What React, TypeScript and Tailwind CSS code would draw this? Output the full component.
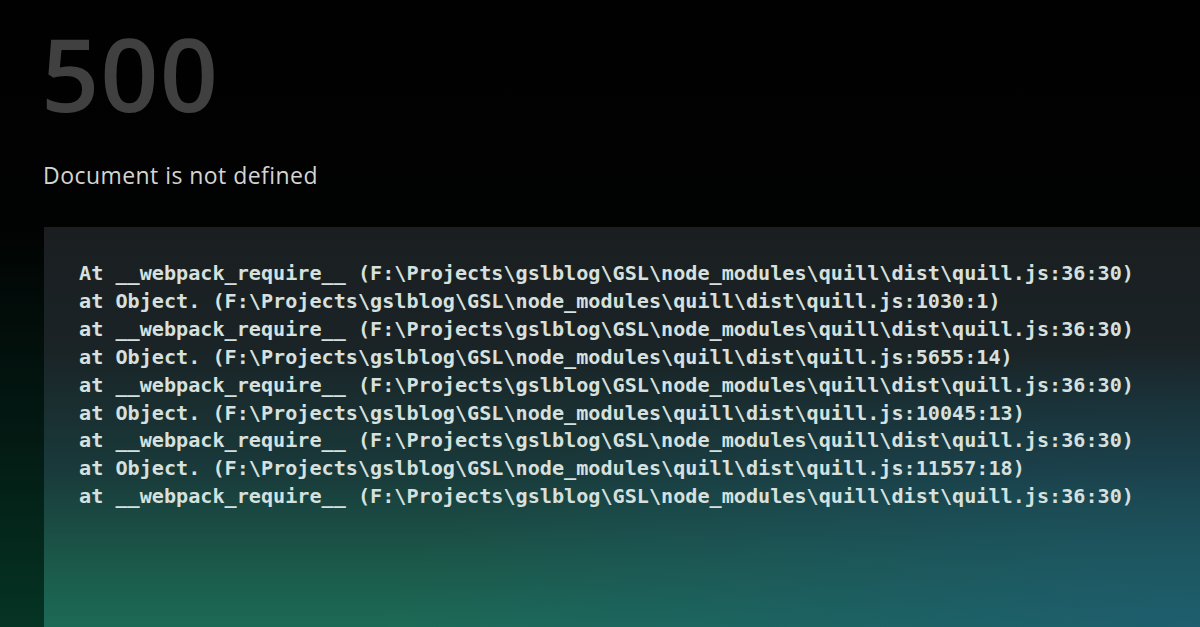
const lines = [
  "At __webpack_require__ (F:\\Projects\\gslblog\\GSL\\node_modules\\quill\\dist\\quill.js:36:30)",
  "at Object. (F:\\Projects\\gslblog\\GSL\\node_modules\\quill\\dist\\quill.js:1030:1)",
  "at __webpack_require__ (F:\\Projects\\gslblog\\GSL\\node_modules\\quill\\dist\\quill.js:36:30)",
  "at Object. (F:\\Projects\\gslblog\\GSL\\node_modules\\quill\\dist\\quill.js:5655:14)",
  "at __webpack_require__ (F:\\Projects\\gslblog\\GSL\\node_modules\\quill\\dist\\quill.js:36:30)",
  "at Object. (F:\\Projects\\gslblog\\GSL\\node_modules\\quill\\dist\\quill.js:10045:13)",
  "at __webpack_require__ (F:\\Projects\\gslblog\\GSL\\node_modules\\quill\\dist\\quill.js:36:30)",
  "at Object. (F:\\Projects\\gslblog\\GSL\\node_modules\\quill\\dist\\quill.js:11557:18)",
  "at __webpack_require__ (F:\\Projects\\gslblog\\GSL\\node_modules\\quill\\dist\\quill.js:36:30)",
];

export default function App() {
  return (
    <div className="w-full h-[627px] overflow-hidden flex flex-col bg-[linear-gradient(180deg,#010101_0%,#010202_35%,#031a13_70%,#053424_100%)] font-['Open_Sans',sans-serif]">
      <h1 className="pl-[41px] pt-[22px] text-[102px] leading-none font-semibold tracking-[1px] text-[#404040]">
        500
      </h1>

      <p className="pl-[43px] mt-[36px] text-[23px] leading-[30px] tracking-[0.45px] text-[#d4d4d4]">
        Document is not defined
      </p>

      <div className="flex-1 ml-[44px] mt-[37px] pl-[35px] pt-[33px] bg-[radial-gradient(ellipse_at_100%_100%,rgba(31,85,125,0.6),transparent_50%),linear-gradient(180deg,#1b1e20_0%,#1a2326_30%,#19393a_60%,#1b5a4a_85%,#1c6a56_100%)]">
        <pre className="font-['DejaVu_Sans_Mono',monospace] font-bold text-[20.15px] leading-[27.9px] text-[#d6e0df]">
          {lines.join("\n")}
        </pre>
      </div>
    </div>
  );
}
